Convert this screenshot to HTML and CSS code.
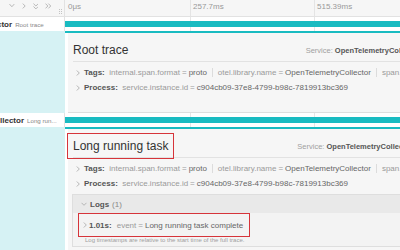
FILE: index.html
```html
<!DOCTYPE html>
<html lang="en">
<head>
  <meta charset="UTF-8">
  <meta name="viewport" content="width=device-width, initial-scale=1.0">
  <title>Trace detail</title>
  <link rel="stylesheet" href="styles.css">
</head>
<body>
  <div class="trace">
    <div class="timeline-header">
      <div class="name-col header-controls">
        <svg class="ctrl" width="6" height="5" viewBox="0 0 6 5"><path d="M0.5 1 L3 3.8 L5.5 1"/></svg>
        <svg class="ctrl" width="4" height="6" viewBox="0 0 4 6"><path d="M0.8 0.5 L3.3 3 L0.8 5.5"/></svg>
        <svg class="ctrl" width="6" height="7" viewBox="0 0 6 7"><path d="M0.5 0.5 L3 3 L5.5 0.5 M0.5 3.5 L3 6 L5.5 3.5"/></svg>
        <svg class="ctrl" width="7" height="6" viewBox="0 0 7 6"><path d="M0.5 0.5 L3 3 L0.5 5.5 M3.5 0.5 L6 3 L3.5 5.5"/></svg>
        <span class="resizer"></span>
      </div>
      <div class="ticks">
        <div class="tick">0μs</div>
        <div class="tick">257.7ms</div>
        <div class="tick">515.39ms</div>
      </div>
    </div>

    <div class="span-row">
      <div class="name-col span-name">
        <span class="svc svc-root">ctor</span>
        <span class="op">Root trace</span>
      </div>
      <div class="span-cell"><div class="bar"></div></div>
    </div>

    <div class="detail-row">
      <div class="detail-accent"></div>
      <div class="detail-body">
        <div class="detail-panel">
          <div class="detail-header">
            <h2 class="title">Root trace</h2>
            <ul class="overview">
              <li>Service: <strong>OpenTelemetryCollector</strong></li>
              <li>Duration: <strong>1.03s</strong></li>
              <li>Start Time: <strong>0μs</strong></li>
            </ul>
          </div>
          <div class="kv-list">
            <div class="kv-row">
              <svg class="chev" width="4" height="6" viewBox="0 0 4 6"><path d="M0.8 0.5 L3.3 3 L0.8 5.5"/></svg>
              <span class="label">Tags:</span>
              <span class="key">internal.span.format</span><span class="eq">=</span><span class="val">proto</span>
              <span class="sep"></span>
              <span class="key">otel.library.name</span><span class="eq">=</span><span class="val">OpenTelemetryCollector</span>
              <span class="sep"></span>
              <span class="key">span.kind</span><span class="eq">=</span><span class="val">internal</span>
            </div>
            <div class="kv-row">
              <svg class="chev" width="4" height="6" viewBox="0 0 4 6"><path d="M0.8 0.5 L3.3 3 L0.8 5.5"/></svg>
              <span class="label">Process:</span>
              <span class="key">service.instance.id</span><span class="eq">=</span><span class="val">c904cb09-37e8-4799-b98c-7819913bc369</span>
            </div>
          </div>
        </div>
      </div>
    </div>

    <div class="span-row">
      <div class="name-col span-name">
        <span class="svc">llector</span>
        <span class="op">Long run...</span>
      </div>
      <div class="span-cell"><div class="bar"></div></div>
    </div>

    <div class="detail-row">
      <div class="detail-accent"></div>
      <div class="detail-body">
        <div class="detail-panel">
          <div class="detail-header">
            <h2 class="title highlight">Long running task</h2>
            <ul class="overview">
              <li>Service: <strong>OpenTelemetryCollector</strong></li>
              <li>Duration: <strong>1.01s</strong></li>
              <li>Start Time: <strong>1.2ms</strong></li>
            </ul>
          </div>
          <div class="kv-list">
            <div class="kv-row">
              <svg class="chev" width="4" height="6" viewBox="0 0 4 6"><path d="M0.8 0.5 L3.3 3 L0.8 5.5"/></svg>
              <span class="label">Tags:</span>
              <span class="key">internal.span.format</span><span class="eq">=</span><span class="val">proto</span>
              <span class="sep"></span>
              <span class="key">otel.library.name</span><span class="eq">=</span><span class="val">OpenTelemetryCollector</span>
              <span class="sep"></span>
              <span class="key">span.kind</span><span class="eq">=</span><span class="val">internal</span>
            </div>
            <div class="kv-row">
              <svg class="chev" width="4" height="6" viewBox="0 0 4 6"><path d="M0.8 0.5 L3.3 3 L0.8 5.5"/></svg>
              <span class="label">Process:</span>
              <span class="key">service.instance.id</span><span class="eq">=</span><span class="val">c904cb09-37e8-4799-b98c-7819913bc369</span>
            </div>
          </div>

          <div class="logs">
            <div class="logs-header">
              <svg class="chev" width="6" height="4" viewBox="0 0 6 4"><path d="M0.5 0.8 L3 3.3 L5.5 0.8"/></svg>
              <strong>Logs</strong>
              <span class="count">(1)</span>
            </div>
            <div class="logs-body">
              <div class="log-item highlight">
                <svg class="chev" width="4" height="6" viewBox="0 0 4 6"><path d="M0.8 0.5 L3.3 3 L0.8 5.5"/></svg>
                <span class="label">1.01s:</span>
                <span class="key">event</span><span class="eq">=</span><span class="val">Long running task complete</span>
              </div>
              <p class="footnote">Log timestamps are relative to the start time of the full trace.</p>
            </div>
          </div>
        </div>
      </div>
    </div>
  </div>
</body>
</html>
```

FILE: styles.css
```css
* {
  margin: 0;
  padding: 0;
  box-sizing: border-box;
}

body {
  font-family: "Liberation Sans", Arial, sans-serif;
  background: #fff;
  width: 400px;
  height: 250px;
  overflow: hidden;
}

.trace {
  width: 556px;
}

.name-col {
  width: 65px;
  flex: none;
  border-right: 1px solid #e2e2e2;
}

/* header */
.timeline-header {
  display: flex;
  height: 17px;
  background: #f6f6f6;
  border-bottom: 1px solid #e2e2e2;
}

.header-controls {
  display: flex;
  align-items: flex-start;
  gap: 7px;
  padding: 3px 0 0 9px;
}

.ctrl path,
.chev path {
  fill: none;
  stroke: #b5b5b5;
  stroke-width: 1;
}

.resizer {
  margin: 6px 2px 0 auto;
  width: 3px;
  height: 5px;
  border-left: 1px dotted #c4c4c4;
  border-right: 1px dotted #c4c4c4;
}

.ticks {
  flex: 1;
  display: grid;
  grid-template-columns: 125px 124px 1fr;
}

.tick {
  border-left: 1px solid #e4e4e4;
  padding: 2px 0 0 2px;
  font-size: 8px;
  color: #999;
}

.tick:first-child {
  border-left: none;
  padding-left: 3px;
}

/* span rows */
.span-row {
  display: flex;
  height: 14px;
}

.span-name {
  display: flex;
  align-items: center;
  gap: 3px;
  white-space: nowrap;
  overflow: hidden;
}

.svc {
  font-size: 8px;
  font-weight: bold;
  color: #333;
}

.svc-root {
  margin-left: -3px;
}

.op {
  font-size: 6.2px;
  color: #888;
}

.span-cell {
  flex: 1;
  padding-top: 4px;
  background:
    linear-gradient(#e6e6e6, #e6e6e6) 125px 0 / 1px 100% no-repeat,
    linear-gradient(#e6e6e6, #e6e6e6) 249px 0 / 1px 100% no-repeat;
}

.bar {
  height: 6px;
  background: #19bbc1;
}

/* detail */
.detail-row {
  display: flex;
}

.detail-accent {
  width: 65px;
  flex: none;
  background: #d6f2f4;
}

.detail-body {
  flex: 1;
  border-top: 2px solid #19bbc1;
  padding-left: 3px;
  background: #fff;
}

.detail-panel {
  background: #f6f6f6;
  border-bottom: 1px solid #dedede;
  padding: 7px 8px 17px 5px;
}

.detail-header {
  display: flex;
  align-items: center;
  border-bottom: 1px solid #e2e2e2;
  padding-bottom: 1px;
}

.title {
  font-size: 12px;
  line-height: 14px;
  font-weight: normal;
  color: #333;
  padding: 3px 0;
}

.overview {
  list-style: none;
  display: flex;
  gap: 12px;
  margin-left: auto;
  font-size: 7.5px;
  color: #a0a0a0;
  white-space: nowrap;
}

.overview strong {
  color: #555;
}

.highlight {
  position: relative;
}

.highlight::after {
  content: '';
  position: absolute;
  inset: -3px -6px;
  border: 1.5px solid #d6343a;
}

.kv-list {
  padding-top: 3px;
}

.kv-row {
  display: flex;
  align-items: center;
  height: 15px;
  padding-left: 3px;
  font-size: 8px;
  white-space: nowrap;
}

.chev {
  flex: none;
  margin-right: 4px;
}

.label {
  font-weight: bold;
  color: #555;
  margin-right: 4.5px;
}

.key {
  color: #9a9a9a;
}

.eq {
  color: #9a9a9a;
  margin: 0 2px;
}

.val {
  color: #666;
}

.sep {
  width: 1px;
  height: 9px;
  background: #dcdcdc;
  margin: 0 5px;
}

/* logs */
.logs {
  margin: 3px 0 0 -1px;
  border: 1px solid #dedede;
  border-right: none;
}

.logs-header {
  display: flex;
  align-items: center;
  gap: 3px;
  height: 18px;
  padding-left: 8px;
  background: #e9e9e9;
  font-size: 8px;
  color: #555;
}

.logs-header .chev {
  margin-right: 0;
}

.count {
  color: #888;
}

.logs-body {
  padding: 6px 0 2px 10px;
  background: #f3f3f3;
}

.log-item {
  display: flex;
  width: fit-content;
  align-items: center;
  height: 12px;
  font-size: 8px;
  white-space: nowrap;
}

.log-item .chev {
  margin-right: 2px;
}

.log-item::after {
  inset: -6px -7px -6px -5px;
}

.log-item .label {
  margin-right: 5px;
}

.footnote {
  margin-top: 5px;
  padding-left: 2px;
  font-size: 6px;
  line-height: 8px;
  color: #a0a0a0;
}
```
